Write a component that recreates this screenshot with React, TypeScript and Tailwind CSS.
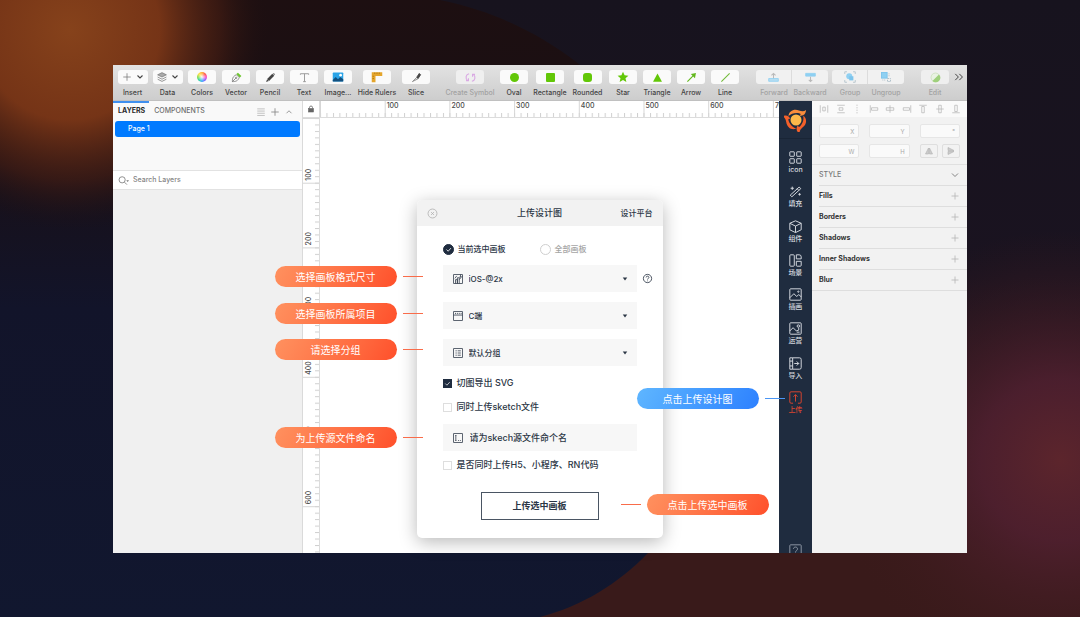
import type { ReactNode } from 'react';

const RULER_STEP = 64.7;

function Backdrop() {
  return (
    <svg
      className="absolute inset-0 -z-10 h-full w-full"
      viewBox="0 0 1080 617"
      preserveAspectRatio="none"
      aria-hidden="true"
    >
      <defs>
        <linearGradient id="base" x1="0" y1="0" x2="0" y2="1">
          <stop offset="0" stopColor="#17131e" />
          <stop offset="0.45" stopColor="#1a1320" />
          <stop offset="0.9" stopColor="#391a1a" />
          <stop offset="1" stopColor="#391a1a" />
        </linearGradient>
        <radialGradient id="wine" gradientUnits="userSpaceOnUse" cx="1060" cy="460" r="230">
          <stop offset="0" stopColor="#5c252c" />
          <stop offset="0.35" stopColor="#512030" stopOpacity="0.85" />
          <stop offset="1" stopColor="#3a1a1a" stopOpacity="0" />
        </radialGradient>
        <linearGradient id="disc" x1="0" y1="0" x2="0" y2="1">
          <stop offset="0" stopColor="#1d0f11" />
          <stop offset="0.2" stopColor="#1a0f13" />
          <stop offset="0.5" stopColor="#12142a" />
          <stop offset="1" stopColor="#11172f" />
        </linearGradient>
        <radialGradient id="ember" gradientUnits="userSpaceOnUse" cx="70" cy="30" r="200">
          <stop offset="0" stopColor="#86421b" />
          <stop offset="0.45" stopColor="#7a3617" stopOpacity="0.95" />
          <stop offset="0.75" stopColor="#4a1f13" stopOpacity="0.6" />
          <stop offset="1" stopColor="#1d0f11" stopOpacity="0" />
        </radialGradient>
      </defs>
      <rect width="1080" height="617" fill="url(#base)" />
      <rect width="1080" height="617" fill="url(#wine)" />
      <path d="M0 0H440C520 16 585 60 630 113L700 250V470L648 553C618 584 582 606 540 617H0Z" fill="url(#disc)" />
      <rect width="300" height="300" fill="url(#ember)" />
    </svg>
  );
}

interface IconProps {
  children: ReactNode;
  className?: string;
}

// 16 unit grid, stroked with the current text colour
function Icon({ children, className = 'size-3' }: IconProps) {
  return (
    <svg
      viewBox="0 0 16 16"
      className={className}
      fill="none"
      stroke="currentColor"
      strokeWidth="1.2"
      aria-hidden="true"
    >
      {children}
    </svg>
  );
}

const Chevron = () => (
  <Icon className="size-2">
    <path d="M3 5l5 5 5-5" strokeWidth="2.2" stroke="#444" />
  </Icon>
);

interface ToolProps {
  label: string;
  width?: string;
  muted?: boolean;
  children: ReactNode;
}

function Tool({ label, width = 'w-[34px]', muted, children }: ToolProps) {
  return (
    <button type="button" className={`flex shrink-0 flex-col items-center gap-[5px] ${width}`}>
      <span
        className={`flex h-[14px] min-w-7 items-center justify-center rounded-[3px] px-1 ${
          muted ? 'bg-[#efefef]' : 'bg-[#fafafa]'
        }`}
      >
        {children}
      </span>
      <span className={`text-[7px] leading-[8px] font-medium whitespace-nowrap ${muted ? 'text-[#a2a2a2]' : 'text-[#444]'}`}>
        {label}
      </span>
    </button>
  );
}

interface ToolPairProps {
  items: { label: string; icon: ReactNode }[];
}

function ToolPair({ items }: ToolPairProps) {
  return (
    <div className="flex shrink-0">
      {items.map((item, i) => (
        <button key={item.label} type="button" className="flex w-9 flex-col items-center gap-[5px]">
          <span
            className={`flex h-[14px] w-full items-center justify-center bg-[#f1f1f1] ${
              i === 0 ? 'rounded-l-[3px] border-r border-[#dcdcdc]' : 'rounded-r-[3px]'
            }`}
          >
            {item.icon}
          </span>
          <span className="text-[7px] leading-[8px] font-medium text-[#a2a2a2]">{item.label}</span>
        </button>
      ))}
    </div>
  );
}

function Toolbar() {
  return (
    <header className="flex h-9 items-start border-b border-[#c0c0c0] bg-linear-to-b from-[#e2e2e2] to-[#cdcdcd] pt-[5px] pr-[3px] pl-[2px]">
      <Tool label="Insert" width="w-[35px]">
        <Icon className="mr-1 size-[10px]">
          <path d="M8 2v12M2 8h12" stroke="#777" />
        </Icon>
        <Chevron />
      </Tool>
      <Tool label="Data" width="w-[35px]">
        <Icon className="mr-1 size-[10px]">
          <path d="M8 1l7 3.5L8 8 1 4.500z" fill="#aaa" stroke="#777" />
          <path d="M1 8l7 3.5L15 8M1 11.500L8 15l7-3.500" stroke="#777" />
        </Icon>
        <Chevron />
      </Tool>
      <Tool label="Colors">
        <span className="size-[10px] rounded-full bg-[radial-gradient(circle,#ffffffcc_10%,transparent_60%),conic-gradient(#ffb13b,#ff5a4d,#ff4fc3,#8b62ff,#3aa9ff,#36d6a5,#8be04a,#ffe14a,#ffb13b)]" />
      </Tool>
      <Tool label="Vector">
        <Icon className="size-[11px]">
          <path d="M2 14c0-5 1-8 6-10l4 4c-2 5-5 6-10 6zM2 14l5-5" stroke="#777" />
          <circle cx="7.500" cy="8.500" r="1" stroke="#777" />
          <path d="M9 2l5 5" stroke="#6bc62a" strokeWidth="3" />
        </Icon>
      </Tool>
      <Tool label="Pencil">
        <Icon className="size-[11px]">
          <path d="M4.500 11.500L12 4" stroke="#444" strokeWidth="4" />
          <path d="M1.500 14.500l1.500-4 2.500 2.500z" fill="#444" stroke="none" />
          <path d="M12 2l2 2" stroke="#777" strokeWidth="2" />
        </Icon>
      </Tool>
      <Tool label="Text">
        <Icon className="size-[11px]">
          <path d="M2 4V2.500h12V4M8 2.500V14M6 14h4" stroke="#999" strokeWidth="1.4" />
        </Icon>
      </Tool>
      <Tool label="Image...">
        <Icon className="size-[12px]">
          <rect x="1" y="2" width="14" height="12" rx="1" fill="#2aa4e8" stroke="none" />
          <path d="M1 12l4-4 3 3 3-3 4 3v3H1z" fill="#12507f" stroke="none" />
          <circle cx="11.500" cy="5.500" r="1.800" fill="#fff" stroke="none" />
        </Icon>
      </Tool>
      <Tool label="Hide Rulers" width="w-[44px]">
        <Icon className="size-[12px]">
          <path d="M1 1.500h14v5H6V15H1z" fill="#e4a52c" stroke="none" />
          <path d="M5 2v2M8 2v2M11 2v2M2 7h2M2 10h2" stroke="#b57b12" />
        </Icon>
      </Tool>
      <Tool label="Slice">
        <Icon className="size-[11px]">
          <path d="M8 8l4-6 2 2-4 6z" fill="#444" stroke="#444" />
          <path d="M8 8l2 2-8 4z" fill="#ddd" stroke="#888" />
        </Icon>
      </Tool>
      <div className="ml-[10px]">
        <Tool label="Create Symbol" width="w-[54px]" muted>
          <Icon className="size-[11px]">
            <path d="M6 2.500a5.500 5.500 0 0 0-2 10M10 13.500a5.500 5.500 0 0 0 2-10" stroke="#d9a8e3" strokeWidth="1.600" />
            <path d="M1.500 12.500H5V9M14.500 3.500H11V7" stroke="#d9a8e3" strokeWidth="1.600" />
          </Icon>
        </Tool>
      </div>
      <Tool label="Oval">
        <span className="size-[9px] rounded-full bg-[#62c707]" />
      </Tool>
      <Tool label="Rectangle" width="w-[38px]">
        <span className="size-[9px] rounded-[1px] bg-[#62c707]" />
      </Tool>
      <Tool label="Rounded" width="w-[37px]">
        <span className="size-[9px] rounded-[3px] bg-[#62c707]" />
      </Tool>
      <Tool label="Star">
        <Icon className="size-[12px]">
          <path d="M8 1l2.100 4.700 5.100.5-3.900 3.400 1.200 5L8 12l-4.500 2.600 1.200-5L.8 6.200l5.100-.5z" fill="#62c707" stroke="none" />
        </Icon>
      </Tool>
      <Tool label="Triangle">
        <Icon className="size-[11px]">
          <path d="M8 2l6.500 12h-13z" fill="#62c707" stroke="none" />
        </Icon>
      </Tool>
      <Tool label="Arrow">
        <Icon className="size-[11px]">
          <path d="M2 14L11 5" stroke="#62b81c" strokeWidth="1.600" />
          <path d="M14.500 1.500L13 9 7 3z" fill="#62b81c" stroke="none" />
        </Icon>
      </Tool>
      <Tool label="Line">
        <Icon className="size-[11px]">
          <path d="M2 14L14 2" stroke="#72bb3a" strokeWidth="1.500" />
        </Icon>
      </Tool>
      <div className="ml-auto flex gap-1">
        <ToolPair
          items={[
            {
              label: 'Forward',
              icon: (
                <Icon className="size-[11px]">
                  <path d="M8 10V2M5 5l3-3 3 3" stroke="#b9b9b9" strokeWidth="1.500" />
                  <path d="M1 9.500h14v4H1z" fill="#b6def2" stroke="#8fd0f2" />
                </Icon>
              ),
            },
            {
              label: 'Backward',
              icon: (
                <Icon className="size-[11px]">
                  <path d="M1 2h14v4H1z" fill="#8fd0f2" stroke="#8fd0f2" />
                  <path d="M8 7v7M5.500 11.500L8 14l2.500-2.500" stroke="#b9b9b9" strokeWidth="1.500" />
                </Icon>
              ),
            },
          ]}
        />
        <ToolPair
          items={[
            {
              label: 'Group',
              icon: (
                <Icon className="size-[12px]">
                  <path d="M1 4V1h3M12 1h3v3M15 12v3h-3M4 15H1v-3" stroke="#b5c4cc" />
                  <circle cx="7" cy="7" r="4" fill="#8fd0f2" stroke="none" />
                  <rect x="7" y="7" width="5.500" height="5.500" fill="#7cc4ec" stroke="none" />
                </Icon>
              ),
            },
            {
              label: 'Ungroup',
              icon: (
                <Icon className="size-[12px]">
                  <rect x="2" y="2" width="7.500" height="7.500" fill="#8fd0f2" stroke="#7cc4ec" />
                  <rect x="10" y="10" width="4" height="4" stroke="#a9bcc6" strokeDasharray="2 1" />
                  <path d="M12 3v4M3 12h4" stroke="#b5c4cc" strokeDasharray="1.500 1" />
                </Icon>
              ),
            },
          ]}
        />
      </div>
      <div className="mr-[2px] ml-[14px]">
        <Tool label="Edit" muted>
          <Icon className="size-[11px]">
            <circle cx="8" cy="8" r="6.500" fill="#e9f3e2" stroke="#cbe0bd" />
            <path d="M13 3.500A6.500 6.500 0 0 1 3.500 13z" fill="#9fd07c" stroke="none" />
          </Icon>
        </Tool>
      </div>
      <button type="button" aria-label="More tools" className="flex h-[14px] items-center text-[#444]">
        <Icon className="size-[10px]">
          <path d="M2 3l5 5-5 5M8.500 3l5 5-5 5" strokeWidth="1.600" />
        </Icon>
      </button>
    </header>
  );
}

function LayersPanel() {
  return (
    <aside className="flex w-[190px] shrink-0 flex-col border-r border-[#dadada] bg-[#f0f0f0]">
      <div className="flex h-[70px] flex-col border-b border-[#e2e2e2] bg-[#f9f9f9]">
        <div className="h-[2px] w-9 shrink-0 bg-[#3f8fee]" />
        <div className="flex h-[17px] items-center pr-2 pl-[5px] text-[7px] text-[#6d6d6d]">
          <button type="button" className="font-bold text-[#2a2a2a]">LAYERS</button>
          <button type="button" className="ml-[9px] font-medium">COMPONENTS</button>
          <div className="ml-auto flex items-center gap-1 text-[#8a8a8a]">
            <Icon className="size-[10px]">
              <path d="M2 3h12M2 6.500h12M2 10h12M2 13.500h12" stroke="#b0b0b0" />
            </Icon>
            <Icon className="size-[10px]">
              <path d="M8 2v12M2 8h12" strokeWidth="1.400" />
            </Icon>
            <Icon className="size-[10px]">
              <path d="M4 10l4-4 4 4" strokeWidth="1.400" />
            </Icon>
          </div>
        </div>
        <button type="button" className="mx-[2px] mt-px flex h-4 items-center rounded-[3px] bg-[#007aff] pl-[13px] text-[7px] font-medium text-white">
          Page 1
        </button>
      </div>
      <label className="flex h-[19px] items-center gap-1 border-b border-[#e2e2e2] bg-white pl-[5px]">
        <Icon className="size-[11px] text-[#7a7a7a]">
          <circle cx="6" cy="7" r="4.500" />
          <path d="M9.500 10.500L13 14" />
          <path d="M12 7.500h4l-2 2.500z" fill="currentColor" stroke="none" />
        </Icon>
        <input
          type="text"
          aria-label="Search Layers"
          placeholder="Search Layers"
          className="min-w-0 flex-1 text-[7px] leading-[10px] font-medium outline-none placeholder:text-[#858585]"
        />
      </label>
    </aside>
  );
}

function TopRuler() {
  return (
    <svg className="h-[17px] min-w-0 flex-1 border-b border-[#dcdcdc] bg-white" aria-hidden="true">
      <defs>
        <pattern id="minor-x" width={RULER_STEP / 10} height="17" patternUnits="userSpaceOnUse">
          <path d="M0.500 12V17" stroke="#cfcfcf" />
        </pattern>
        <pattern id="major-x" width={RULER_STEP} height="17" patternUnits="userSpaceOnUse">
          <path d="M0.500 0V17" stroke="#d6d6d6" />
        </pattern>
      </defs>
      <rect width="100%" height="17" fill="url(#minor-x)" />
      <rect width="100%" height="17" fill="url(#major-x)" />
      {[100, 200, 300, 400, 500, 600, 700].map(n => (
        <text key={n} x={(n / 100) * RULER_STEP + 2} y="7" fontSize="7" fontWeight="500" fill="#4a4a4a">
          {n}
        </text>
      ))}
    </svg>
  );
}

function SideRuler() {
  return (
    <svg className="h-auto w-[17px] shrink-0 border-r border-[#dcdcdc] bg-white" aria-hidden="true">
      <defs>
        <pattern id="minor-y" width="17" height={RULER_STEP / 10} patternUnits="userSpaceOnUse">
          <path d="M12 0.500H17" stroke="#cfcfcf" />
        </pattern>
        <pattern id="major-y" width="17" height={RULER_STEP} patternUnits="userSpaceOnUse">
          <path d="M0 0.500H17" stroke="#d6d6d6" />
        </pattern>
      </defs>
      <rect width="17" height="100%" fill="url(#minor-y)" />
      <rect width="17" height="100%" fill="url(#major-y)" />
      {[100, 200, 300, 400, 500, 600].map(n => (
        <text
          key={n}
          transform={`translate(8 ${(n / 100) * RULER_STEP - 2}) rotate(-90)`}
          fontSize="7"
          fontWeight="500"
          fill="#4a4a4a"
        >
          {n}
        </text>
      ))}
    </svg>
  );
}

interface CalloutProps {
  text: string;
  place: string;
  tone?: 'orange' | 'blue';
  lineFirst?: boolean;
}

function Callout({ text, place, tone = 'orange', lineFirst }: CalloutProps) {
  const blue = tone === 'blue';
  return (
    <div className={`absolute z-10 flex items-center gap-[6px] ${lineFirst ? 'flex-row-reverse' : ''} ${place}`}>
      <span
        className={`flex h-[21px] w-[122px] items-center justify-center rounded-full text-[10px] leading-[14px] text-white ${
          blue
            ? 'bg-linear-120 from-[#5fb6ff] to-[#2d80ff]'
            : 'bg-linear-120 from-[#ff915f] to-[#ff4f2a]'
        }`}
      >
        {text}
      </span>
      <span className={`h-px w-5 ${blue ? 'bg-[#4a96f5]' : 'bg-[#f96c4a]'}`} />
    </div>
  );
}

interface FieldProps {
  id: string;
  label: string;
  value: string;
  icon: ReactNode;
}

function SelectField({ id, label, value, icon }: FieldProps) {
  return (
    <div className="flex h-[27px] items-center gap-[6px] bg-[#f7f7f7] pr-2 pl-[10px]">
      <Icon className="size-[10px] shrink-0">{icon}</Icon>
      <select id={id} aria-label={label} className="min-w-0 flex-1 appearance-none text-[8px] leading-[12px] font-medium outline-none">
        <option>{value}</option>
      </select>
      <Icon className="size-[8px] shrink-0">
        <path d="M3.500 5h9L8 11z" fill="currentColor" stroke="none" />
      </Icon>
    </div>
  );
}

function RadioField({ label, checked }: { label: string; checked?: boolean }) {
  return (
    <label className={`flex items-center gap-1 text-[8px] leading-[12px] font-medium ${checked ? '' : 'text-[#a5a5a5]'}`}>
      <span className="grid">
        <input
          type="radio"
          name="scope"
          defaultChecked={checked}
          className="peer col-start-1 row-start-1 size-[11px] appearance-none rounded-full border border-[#cfcfcf] bg-white checked:border-[#1f2c3f] checked:bg-[#1f2c3f]"
        />
        <Icon className="pointer-events-none col-start-1 row-start-1 hidden size-[11px] text-white peer-checked:block">
          <path d="M5 8l2.500 2.500L11.500 6" />
        </Icon>
      </span>
      {label}
    </label>
  );
}

function CheckField({ label, checked }: { label: string; checked?: boolean }) {
  return (
    <label className="flex items-center gap-[5px] text-[9px] leading-[14px] font-medium">
      <span className="grid">
        <input
          type="checkbox"
          defaultChecked={checked}
          className="peer col-start-1 row-start-1 size-[9px] appearance-none border border-[#dedede] bg-white checked:border-[#1f2c3f] checked:bg-[#1f2c3f]"
        />
        <Icon className="pointer-events-none col-start-1 row-start-1 hidden size-[9px] text-white peer-checked:block">
          <path d="M4 8l3 3 5-5.500" />
        </Icon>
      </span>
      {label}
    </label>
  );
}

function UploadDialog() {
  return (
    <section
      role="dialog"
      aria-label="上传设计图"
      className="relative h-[338px] w-[246px] rounded-[5px] bg-white text-[#2b3645] shadow-[0_4px_18px_rgba(0,0,0,0.28)]"
    >
      <header className="grid h-[26px] grid-cols-3 items-center rounded-t-[5px] bg-[#f2f2f2] px-[10px]">
        <button type="button" aria-label="关闭" className="text-[#b0b0b0]">
          <Icon className="size-[11px]">
            <circle cx="8" cy="8" r="6.500" />
            <path d="M6 6l4 4M10 6l-4 4" />
          </Icon>
        </button>
        <h1 className="text-center text-[9px] leading-[14px] font-medium">上传设计图</h1>
        <a href="#platform" className="text-right text-[8px] leading-[12px] font-medium">设计平台</a>
      </header>

      <form className="flex flex-col px-[26px] pt-[17px]">
        <div className="grid grid-cols-2">
          <RadioField label="当前选中画板" checked />
          <RadioField label="全部画板" />
        </div>

        <div className="mt-[10px] flex flex-col gap-[10px]">
          <div className="relative">
            <SelectField
              id="size"
              label="画板尺寸"
              value="iOS-@2x"
              icon={
                <>
                  <rect x="1" y="1" width="14" height="14" />
                  <path d="M4 15V9h3v6M7 15V6h3v9M3 7l3-4M10 9l5-6M10 5h2V1" />
                </>
              }
            />
            <button type="button" aria-label="帮助" className="absolute top-2 left-full ml-[5px]">
              <Icon className="size-[11px]">
                <circle cx="8" cy="8" r="6" />
                <path d="M6 6.500c0-2.500 4-2.500 4 0C10 8 8 8 8 9.500M8 11v1" />
              </Icon>
            </button>
          </div>
          <SelectField
            id="project"
            label="所属项目"
            value="C端"
            icon={
              <>
                <rect x="1" y="1" width="14" height="14" />
                <path d="M1 6.500h14M4 3v2M7 3v2M10 3v2M13 3v2" />
              </>
            }
          />
          <SelectField
            id="group"
            label="分组"
            value="默认分组"
            icon={
              <>
                <rect x="1" y="1" width="14" height="14" />
                <path d="M4 4.500h2M7.500 4.500h5M4 8h2M7.500 8h5M4 11.500h2M7.500 11.500h5" />
              </>
            }
          />
        </div>

        <div className="mt-[10px] flex flex-col gap-[10px]">
          <CheckField label="切图导出 SVG" checked />
          <CheckField label="同时上传sketch文件" />
        </div>

        <div className="mt-[10px] mb-[7px] flex h-[27px] items-center gap-[7px] bg-[#f7f7f7] px-[10px]">
          <Icon className="size-[10px] shrink-0">
            <rect x="1" y="1" width="14" height="14" />
            <path d="M3.500 4h2M4.500 4v8M3.500 12h2M8 12h1.500M11 12h1.500" />
          </Icon>
          <input
            type="text"
            aria-label="源文件名"
            placeholder="请为skech源文件命个名"
            className="min-w-0 flex-1 text-[9px] leading-[14px] font-medium outline-none placeholder:text-[#2b3645]"
          />
        </div>

        <CheckField label="是否同时上传H5、小程序、RN代码" />

        <button
          type="button"
          className="mt-5 h-7 w-[118px] self-center border border-[#4a5563] text-[9px] leading-[14px] font-bold"
        >
          上传选中画板
        </button>
      </form>

      <Callout text="选择画板格式尺寸" place="top-[66px] right-[240px]" />
      <Callout text="选择画板所属项目" place="top-[103px] right-[240px]" />
      <Callout text="请选择分组" place="top-[139px] right-[240px]" />
      <Callout text="为上传源文件命名" place="top-[227px] right-[240px]" />
      <Callout text="点击上传设计图" place="top-[188px] left-[220px]" tone="blue" />
      <Callout text="点击上传选中画板" place="top-[294px] left-[204px]" lineFirst />
    </section>
  );
}

const PLUGINS: { label: string; icon: ReactNode; active?: boolean }[] = [
  {
    label: 'icon',
    icon: (
      <>
        <rect x="1" y="1" width="5.500" height="5.500" rx="0.500" />
        <rect x="9.500" y="1" width="5.500" height="5.500" rx="0.500" />
        <rect x="1" y="9.500" width="5.500" height="5.500" rx="0.500" />
        <rect x="9.500" y="9.500" width="5.500" height="5.500" rx="0.500" />
      </>
    ),
  },
  {
    label: '填充',
    icon: <path d="M1.500 12.500l11-10 2 2-11 10zM10 4.500l2 2M4 2v4M2 4h4M13 10v3M11.500 11.500h3" />,
  },
  { label: '组件', icon: <path d="M8 1l7 3v8l-7 3.500L1 12V4zM1 4l7 3.500L15 4M8 7.500v8" /> },
  {
    label: '场景',
    icon: (
      <>
        <rect x="1" y="1" width="5.500" height="14" rx="1" />
        <path d="M9 1h3.500A2.500 2.500 0 0 1 15 3.500V6H9zM9 9h6v5a1 1 0 0 1-1 1h-4a1 1 0 0 1-1-1z" />
      </>
    ),
  },
  {
    label: '插画',
    icon: (
      <>
        <rect x="1" y="1" width="14" height="14" rx="1" />
        <path d="M1 12l5-5 3.500 3.500L12 8l3 3" />
        <circle cx="11.500" cy="4.500" r="0.800" />
      </>
    ),
  },
  {
    label: '运营',
    icon: (
      <>
        <rect x="1" y="1" width="14" height="14" rx="1" />
        <path d="M1 11l4-4 4 4 3-1v-3M9.500 12.500H13" />
        <circle cx="11.500" cy="5" r="1.500" />
      </>
    ),
  },
  {
    label: '导入',
    icon: <path d="M4.500 1H13a2 2 0 0 1 2 2v10a2 2 0 0 1-2 2H4.500zM4.500 1H1v14h3.500M1 5h3.500M1 11h3.500M6.500 8H12M9.500 5.500L12 8l-2.500 2.500" />,
  },
  {
    label: '上传',
    active: true,
    icon: <path d="M5 15H2.500A1.500 1.500 0 0 1 1 13.500v-11A1.500 1.500 0 0 1 2.500 1h11A1.500 1.500 0 0 1 15 2.500v11a1.500 1.500 0 0 1-1.500 1.500H11M8 13V4.500M5.500 7L8 4.500 10.500 7" />,
  },
];

function PluginBar() {
  return (
    <nav className="flex w-[33px] shrink-0 flex-col items-center overflow-hidden bg-[#1f2c3f]">
      <div className="flex h-[38px] w-full items-center justify-center border-b border-[#192536]">
        <svg viewBox="-12 -12 24 24" className="size-6" aria-hidden="true">
          <circle r="5.500" fill="#fdb94a" />
          {[0, 120, 240].map(angle => (
            <path
              key={angle}
              transform={`rotate(${angle})`}
              d="M-7.500-4C-7-9-2-11.500 3-9.500 6-8.500 8-8.500 10-10 10-6 7-3.500 3.500-4.500 6-6 4-7 1-7-3-7-5-6-7.500-4z"
              fill={angle === 0 ? '#f98d3c' : '#f4602a'}
            />
          ))}
        </svg>
      </div>
      <ul className="mt-3 flex h-[263px] flex-col justify-between">
        {PLUGINS.map(p => (
          <li key={p.label}>
            <button
              type="button"
              className={`flex flex-col items-center gap-[2px] ${p.active ? 'text-[#d8452f]' : 'text-[#d5d9df]'}`}
            >
              <Icon className="size-[13px]">{p.icon}</Icon>
              <span className="text-[7px] leading-[8px] font-medium">{p.label}</span>
            </button>
          </li>
        ))}
      </ul>
      <button type="button" aria-label="帮助" className="mt-auto h-[9px] overflow-hidden text-[#8d96a3]">
        <Icon className="size-[13px]">
          <rect x="1" y="1" width="14" height="14" rx="1" />
          <path d="M5.500 6c0-3 5-3 5 0C10.500 8 8 8 8 10.500" />
        </Icon>
      </button>
    </nav>
  );
}

const ALIGN_ICONS = [
  'M2 2v12M14 2v12M6 5h4v6H6z',
  'M2 2h12M2 14h12M5 6h6v4H5z',
  'M8 1v2M8 5v2M8 9v2M8 13v2',
  'M2 2v12M4 6h10v4H4z',
  'M8 2v12M2 6h12v4H2z',
  'M14 2v12M2 6h10v4H2z',
  'M2 2h12M6 4h4v10H6z',
  'M2 8h12M6 2h4v12H6z',
  'M2 14h12M6 2h4v10H6z',
];

function SizeInput({ suffix, label }: { suffix: string; label: string }) {
  return (
    <label className="flex h-[14px] items-center rounded-[2px] border border-[#e6e6e6] bg-[#fafafa] pr-1 text-[6px] text-[#a8a8a8]">
      <input type="text" aria-label={label} className="min-w-0 flex-1 outline-none" />
      {suffix}
    </label>
  );
}

function Inspector() {
  return (
    <aside className="w-[155px] shrink-0 bg-[#f2f2f2]">
      <div className="flex h-4 items-center justify-between bg-[#fafafa] pr-[6px] pl-[7px] text-[#b5b5b5]">
        {ALIGN_ICONS.map((d, i) => (
          <Icon key={i} className="size-[10px]">
            <path d={d} />
          </Icon>
        ))}
      </div>
      <div className="grid grid-cols-3 gap-x-[10px] gap-y-[6px] border-b border-[#e0e0e0] px-[7px] pt-[7px] pb-[6px]">
        <SizeInput suffix="X" label="X" />
        <SizeInput suffix="Y" label="Y" />
        <SizeInput suffix="°" label="Rotation" />
        <SizeInput suffix="W" label="Width" />
        <SizeInput suffix="H" label="Height" />
        <div className="grid grid-cols-2 gap-1 text-[#b0b0b0]">
          <button type="button" aria-label="Flip horizontal" className="flex items-center justify-center rounded-[2px] border border-[#dedede]">
            <Icon className="size-[8px]">
              <path d="M7 2v12H1zM9 2v12h6z" fill="#ccc" />
            </Icon>
          </button>
          <button type="button" aria-label="Flip vertical" className="flex items-center justify-center rounded-[2px] border border-[#dedede]">
            <Icon className="size-[8px]">
              <path d="M2 7h12L2 1zM2 9h12L2 15z" fill="#ccc" />
            </Icon>
          </button>
        </div>
      </div>
      <div className="flex h-5 items-center justify-between pr-2 pl-[7px] text-[7px] font-medium text-[#777]">
        STYLE
        <Icon className="size-[8px]">
          <path d="M2 5l6 6 6-6" strokeWidth="1.800" />
        </Icon>
      </div>
      <ul className="ml-[7px] text-[7px] font-bold text-[#333]">
        {['Fills', 'Borders', 'Shadows', 'Inner Shadows', 'Blur'].map(name => (
          <li key={name} className="flex h-[21px] items-center justify-between border-t border-[#dedede] pr-2">
            {name}
            <button type="button" aria-label={`Add ${name}`} className="text-[#b5b5b5]">
              <Icon className="size-[8px]">
                <path d="M8 1v14M1 8h14" strokeWidth="1.600" />
              </Icon>
            </button>
          </li>
        ))}
      </ul>
      <div className="border-t border-[#dedede]" />
    </aside>
  );
}

export default function App() {
  return (
    <div className="relative isolate flex min-h-screen flex-col overflow-hidden bg-[#17131e] px-[113px] pt-[65px] pb-16 font-['Inter','Noto_Sans_CJK_SC',sans-serif]">
      <Backdrop />
      <div className="flex flex-1 flex-col bg-white">
        <Toolbar />
        <div className="flex flex-1">
          <LayersPanel />
          <main className="flex min-w-0 flex-1 flex-col">
            <div className="flex">
              <div className="flex size-[17px] shrink-0 items-center justify-center border-r border-b border-[#dcdcdc] text-[#666]">
                <Icon className="size-[8px]">
                  <rect x="3" y="7" width="10" height="7" fill="currentColor" />
                  <path d="M5 7V5a3 3 0 0 1 6 0v2" strokeWidth="1.600" />
                </Icon>
              </div>
              <TopRuler />
            </div>
            <div className="flex flex-1">
              <SideRuler />
              <div className="flex flex-1 items-start justify-center pt-[82px] pr-5 pb-[15px]">
                <UploadDialog />
              </div>
            </div>
          </main>
          <PluginBar />
          <Inspector />
        </div>
      </div>
    </div>
  );
}
